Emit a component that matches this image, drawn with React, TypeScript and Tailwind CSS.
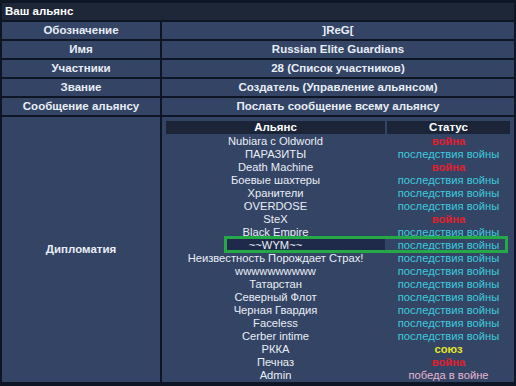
import React from "react";

type Status = "war" | "after" | "union" | "win";

const rows: { name: string; status: Status }[] = [
  { name: "Nubiara c Oldworld", status: "war" },
  { name: "ПАРАЗИТЫ", status: "after" },
  { name: "Death Machine", status: "war" },
  { name: "Боевые шахтеры", status: "after" },
  { name: "Хранители", status: "after" },
  { name: "OVERDOSE", status: "after" },
  { name: "SteX", status: "war" },
  { name: "Black Empire", status: "after" },
  { name: "~~WYM~~", status: "after" },
  { name: "Неизвестность Порождает Страх!", status: "after" },
  { name: "wwwwwwwwww", status: "after" },
  { name: "Татарстан", status: "after" },
  { name: "Северный Флот", status: "after" },
  { name: "Черная Гвардия", status: "after" },
  { name: "Faceless", status: "after" },
  { name: "Cerber intime", status: "after" },
  { name: "РККА", status: "union" },
  { name: "Печназ", status: "war" },
  { name: "Admin", status: "win" },
];

const info = [
  ["Обозначение", "]ReG["],
  ["Имя", "Russian Elite Guardians"],
  ["Участники", "28 (Список участников)"],
  ["Звание", "Создатель (Управление альянсом)"],
  ["Сообщение альянсу", "Послать сообщение всему альянсу"],
];

function StatusText({ status }: { status: Status }) {
  if (status === "war") return <span className="font-bold text-[#e0202c]">война</span>;
  if (status === "union") return <span className="font-bold text-[#e6e62a]">союз</span>;
  if (status === "win") return <span className="text-[#e4b6d2]">победа в войне</span>;
  return <span className="text-[#3ccbdc]">последствия войны</span>;
}

export default function App() {
  return (
    <div
      className="h-[386px] w-[516px] overflow-hidden bg-[#0e1626] pt-[3px] px-[2px] text-[11.2px] leading-[13px] text-[#e8eef6]"
      style={{ fontFamily: "Tahoma, 'Liberation Sans', Arial, sans-serif" }}
    >
      <div className="flex h-[17px] items-center bg-[#1e2738] pl-[3px] text-[11.5px] font-bold text-white">Ваш альянс</div>
      <div className="mt-[2px] flex flex-col gap-[2px]">
        {info.map(([label, value]) => (
          <div key={label} className="grid h-[17px] grid-cols-[158px_1fr] gap-[2px] text-[11.5px] font-bold">
            <div className="flex items-center justify-center bg-[#344465]">{label}</div>
            <div className="flex items-center justify-center bg-[#344465]">{value}</div>
          </div>
        ))}
        <div className="grid h-[265px] grid-cols-[158px_1fr] gap-[2px]">
          <div className="flex items-center justify-center bg-[#344465] text-[11.5px] font-bold">Дипломатия</div>
          <div className="relative bg-[#344465] px-[4px] pt-[4px]">
            <div className="grid h-[13px] grid-cols-[219px_1fr] gap-[2px] text-[11.5px] font-bold text-white">
              <div className="flex items-center justify-center bg-[#1c2538]">Альянс</div>
              <div className="flex items-center justify-center bg-[#1c2538]">Статус</div>
            </div>
            {/* highlight behind the marked row */}
            <div className="absolute left-[65px] top-[122px] h-[11px] w-[158px] bg-[#1f2a4a]" />
            <div className="relative mt-[1px]">
              {rows.map((row) => (
                <div key={row.name} className="grid h-[13px] grid-cols-[219px_1fr] gap-[2px]">
                  <div className="flex items-center justify-center whitespace-nowrap">{row.name}</div>
                  <div className="flex items-center justify-center whitespace-nowrap">
                    <StatusText status={row.status} />
                  </div>
                </div>
              ))}
            </div>
            <div className="pointer-events-none absolute left-[62px] top-[119px] h-[17px] w-[284px] border-[3px] border-[#25a846]" />
          </div>
        </div>
      </div>
    </div>
  );
}
